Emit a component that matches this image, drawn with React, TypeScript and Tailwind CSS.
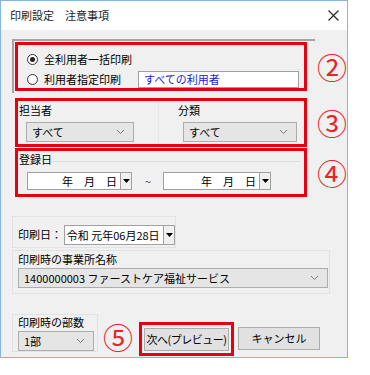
import React from 'react';

const JP = "font-['Noto_Sans_CJK_JP','Noto_Sans',sans-serif]";

const Chevron = () => (
  <svg width="9" height="6" viewBox="0 0 9 6" className="shrink-0">
    <path d="M1 1 L4.5 4.5 L8 1" fill="none" stroke="#7a7a7a" strokeWidth="1" />
  </svg>
);

const DropBtn = () => (
  <div className="w-[11px] shrink-0 self-stretch flex items-center justify-center border-l border-[#a0a0a0] bg-[#f0f0f0]">
    <svg width="7" height="4" viewBox="0 0 7 4">
      <path d="M0 0 H7 L3.5 4 Z" fill="#000" />
    </svg>
  </div>
);

const Select = ({ label, className }: { label: string; className: string }) => (
  <div className={`h-[20px] flex items-center justify-between pl-[5px] pr-[8px] bg-[#e5e5e5] border border-[#adadad] ${className}`}>
    <span className="leading-none text-black whitespace-nowrap">{label}</span>
    <Chevron />
  </div>
);

const DateBox = ({ text, className, right }: { text: string; className: string; right?: boolean }) => (
  <div className={`h-[18px] flex bg-white border border-[#a0a0a0] ${className}`}>
    <div className={`flex-1 flex items-center leading-none whitespace-nowrap ${right ? 'justify-end pr-[3px]' : 'pl-[2px]'}`}>{text}</div>
    <DropBtn />
  </div>
);

const Circled = ({ n, className }: { n: string; className: string }) => (
  <span className={`text-[30px] leading-none text-[#e8242b] ${className}`}>{n}</span>
);

export default function App() {
  return (
    <div className={`w-[370px] h-[375px] bg-white ${JP}`}>
      <div className="w-[348px] h-[358px] border border-[#86b4e4] flex flex-col">
        {/* Title bar */}
        <div className="h-[29px] bg-white flex items-center justify-between pl-[9px] pr-[8px]">
          <span className="text-[11px] text-[#222] whitespace-nowrap">印刷設定　注意事項</span>
          <svg width="11" height="11" viewBox="0 0 11 11">
            <path d="M0.5 0.5 L10.5 10.5 M10.5 0.5 L0.5 10.5" stroke="#222" strokeWidth="1.1" />
          </svg>
        </div>

        {/* Body */}
        <div className="flex-1 bg-[#f0f0f0] pl-[11px] flex flex-col text-[11px] text-black whitespace-nowrap">
          {/* Section 2 */}
          <div className="mt-[9px] flex items-start">
            <div className="w-[304px] h-[54px] border-t-2 border-l-2 border-[#a5a5a5] pl-[1px] pt-[1px]">
              <div className="w-[292px] h-[49px] border-[3px] border-[#e60012] pl-[9px] pt-[6px] flex flex-col gap-[3px]">
                <div className="flex items-center h-[17px]">
                  <span className="w-[11px] h-[11px] shrink-0 rounded-full border border-[#333] bg-white flex items-center justify-center">
                    <span className="w-[5px] h-[5px] rounded-full bg-[#222]" />
                  </span>
                  <span className="ml-[6px] leading-none">全利用者一括印刷</span>
                </div>
                <div className="flex items-center h-[17px]">
                  <span className="w-[11px] h-[11px] shrink-0 rounded-full border border-[#333] bg-white" />
                  <span className="ml-[6px] leading-none w-[84px]">利用者指定印刷</span>
                  <div className="ml-[10px] w-[161px] h-[17px] bg-white border border-[#a0a0a0] flex items-center pl-[5px] text-[#1c1cd6] leading-none">
                    すべての利用者
                  </div>
                </div>
              </div>
            </div>
            <Circled n="②" className="ml-[2px] mt-[12px]" />
          </div>

          {/* Section 3 */}
          <div className="mt-[5px] flex items-start">
            <div className="ml-[3px] w-[294px] h-[49px] border-[3px] border-[#e60012] flex">
              <div className="w-[140px] pl-[1px] pt-[4px]">
                <div className="leading-none h-[13px]">担当者</div>
                <Select label="すべて" className="ml-[7px] mt-[4px] w-[108px]" />
              </div>
              <div className="pl-[19px] pt-[4px] border-l border-[#e6e6e6]">
                <div className="leading-none h-[13px]">分類</div>
                <Select label="すべて" className="ml-[5px] mt-[4px] w-[114px]" />
              </div>
            </div>
            <Circled n="③" className="ml-[10px] mt-[9px]" />
          </div>

          {/* Section 4 */}
          <div className="mt-[1px] flex items-start">
            <div className="ml-[3px] w-[294px] h-[49px] border-[3px] border-[#e60012] pl-[1px] pt-[3px]">
              <div className="flex items-center">
                <span className="leading-none">登録日</span>
                <span className="flex-1 h-px bg-[#dcdcdc] mr-[3px] mt-[4px]" />
              </div>
              <div className="mt-[7px] flex items-center">
                <DateBox text="年　月　日" right className="ml-[8px] w-[105px]" />
                <span className="ml-[13px] leading-none text-[#444]">~</span>
                <DateBox text="年　月　日" right className="ml-[12px] w-[108px]" />
              </div>
            </div>
            <Circled n="④" className="ml-[10px] mt-[9px]" />
          </div>

          {/* 印刷日 */}
          <div className="mt-[19px] w-[164px] h-[32px] border border-[#e2e2e2] flex items-end pb-[2px] pl-[5px]">
            <span className="leading-none w-[46px] mb-[5px]">印刷日：</span>
            <DateBox text="令和 元年06月28日" className="w-[112px] h-[20px]" />
          </div>

          {/* 事業所名称 */}
          <div className="mt-[2px] w-[318px] h-[44px] border border-[#e2e2e2] pl-[5px] pt-[3px]">
            <div className="leading-none h-[12px]">印刷時の事業所名称</div>
            <Select label="1400000003 ファーストケア福祉サービス" className="mt-[2px] w-[310px]" />
          </div>

          {/* Bottom row */}
          <div className="mt-[20px] flex items-start">
            <div className="w-[86px] h-[38px] border border-[#e2e2e2] pl-[5px] pt-[2px]">
              <div className="leading-none h-[12px]">印刷時の部数</div>
              <Select label="1部" className="mt-[2px] w-[76px] h-[19px]" />
            </div>
            <Circled n="⑤" className="ml-[5px] mt-[7px]" />
            <div className="ml-[6px] mt-[8px] w-[95px] h-[34px] border-[3px] border-[#e60012] flex items-center justify-center">
              <div className="w-[85px] h-[23px] bg-[#e1e1e1] border border-[#adadad] flex items-center justify-center leading-none tracking-[-0.5px]">
                次へ(プレビュー)
              </div>
            </div>
            <div className="ml-[4px] mt-[13px] w-[82px] h-[23px] bg-[#e1e1e1] border border-[#adadad] flex items-center justify-center leading-none">
              キャンセル
            </div>
          </div>
        </div>
      </div>
    </div>
  );
}
